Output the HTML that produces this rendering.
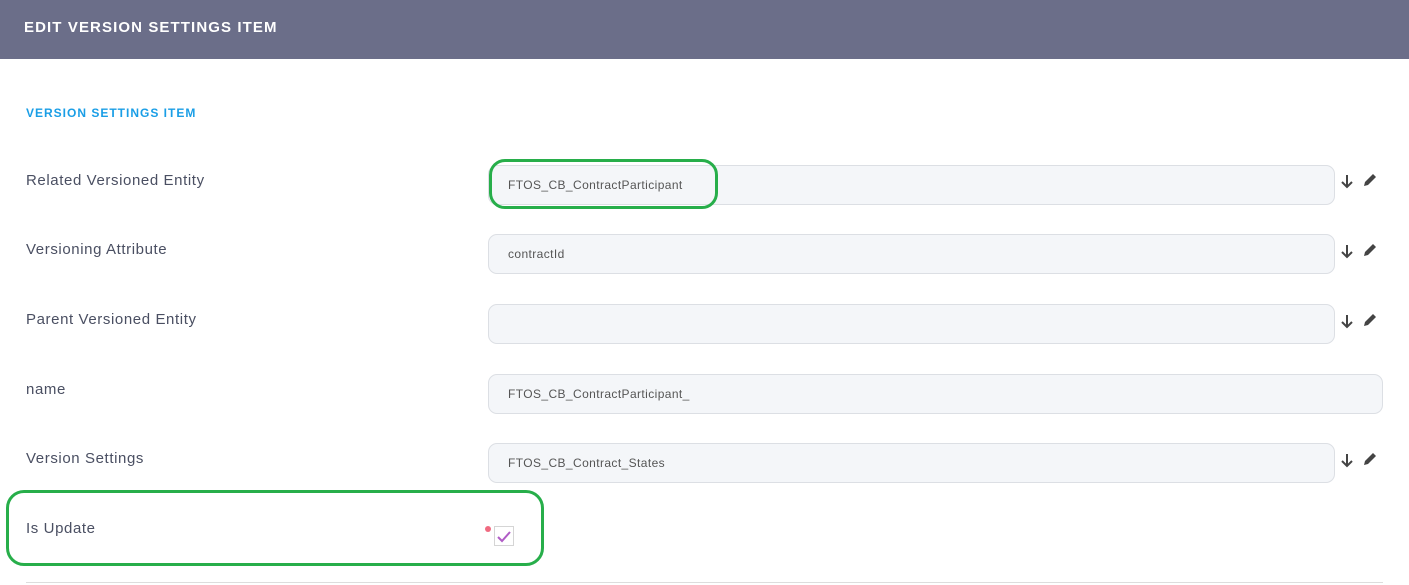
<!DOCTYPE html>
<html><head><style>
body{margin:0;width:1409px;height:585px;background:#fff;font-family:"Liberation Sans",sans-serif;position:relative;overflow:hidden}
.hdr{position:absolute;left:0;top:0;width:1409px;height:59px;background:#6b6e89;color:#fff;font-weight:bold;font-size:15px;letter-spacing:1.1px}
.hdr span{position:absolute;left:24px;top:19px}
.sec{position:absolute;left:26px;top:106px;color:#1a9ee6;font-weight:bold;font-size:12px;letter-spacing:1px}
.lbl{position:absolute;left:26px;color:#4a4f62;font-size:15px;letter-spacing:0.6px}
.inp{position:absolute;left:488px;width:847px;height:40px;border:1px solid #dcdfe4;border-radius:9px;background:#f4f6f9;box-sizing:border-box;font-size:12px;color:#555;padding:12px 0 0 19px;letter-spacing:0.4px}
.ic{position:absolute;left:1340px}
.green{position:absolute;border:3px solid #27ae4a;border-radius:14px;box-sizing:border-box}
</style></head><body>
<div class="hdr"><span>EDIT VERSION SETTINGS ITEM</span></div>
<div class="sec">VERSION SETTINGS ITEM</div>

<div class="lbl" style="top:172px">Related Versioned Entity</div>
<div class="inp" style="top:165px">FTOS_CB_ContractParticipant</div>
<div class="lbl" style="top:241px">Versioning Attribute</div>
<div class="inp" style="top:234px">contractId</div>
<div class="lbl" style="top:311px">Parent Versioned Entity</div>
<div class="inp" style="top:304px"></div>
<div class="lbl" style="top:381px">name</div>
<div class="inp" style="top:374px;width:895px">FTOS_CB_ContractParticipant_</div>
<div class="lbl" style="top:450px">Version Settings</div>
<div class="inp" style="top:443px">FTOS_CB_Contract_States</div>
<div class="lbl" style="top:520px">Is Update</div>

<svg class="ic" style="top:172px" width="40" height="20"><path d="M7 3v12M2 10l5 5 5-5" stroke="#444" stroke-width="2" fill="none"/><path d="M24 14l1-4 8-8 3 3-8 8z" fill="#444"/></svg>
<svg class="ic" style="top:242px" width="40" height="20"><path d="M7 3v12M2 10l5 5 5-5" stroke="#444" stroke-width="2" fill="none"/><path d="M24 14l1-4 8-8 3 3-8 8z" fill="#444"/></svg>
<svg class="ic" style="top:312px" width="40" height="20"><path d="M7 3v12M2 10l5 5 5-5" stroke="#444" stroke-width="2" fill="none"/><path d="M24 14l1-4 8-8 3 3-8 8z" fill="#444"/></svg>
<svg class="ic" style="top:451px" width="40" height="20"><path d="M7 3v12M2 10l5 5 5-5" stroke="#444" stroke-width="2" fill="none"/><path d="M24 14l1-4 8-8 3 3-8 8z" fill="#444"/></svg>

<div style="position:absolute;left:485px;top:526px;width:6px;height:6px;border-radius:50%;background:#f06a80"></div>
<div style="position:absolute;left:494px;top:526px;width:20px;height:20px;border:1px solid #d5d5d5;box-sizing:border-box"></div>
<svg style="position:absolute;left:494px;top:526px" width="20" height="20"><path d="M4 11l4 4 8-9" stroke="#b05cc6" stroke-width="2" fill="none"/></svg>

<div style="position:absolute;left:26px;top:582px;width:1357px;height:1px;background:#ddd"></div>

<div class="green" style="left:489px;top:159px;width:229px;height:50px;border-radius:16px"></div>
<div class="green" style="left:6px;top:490px;width:538px;height:76px;border-radius:18px"></div>
</body></html>
